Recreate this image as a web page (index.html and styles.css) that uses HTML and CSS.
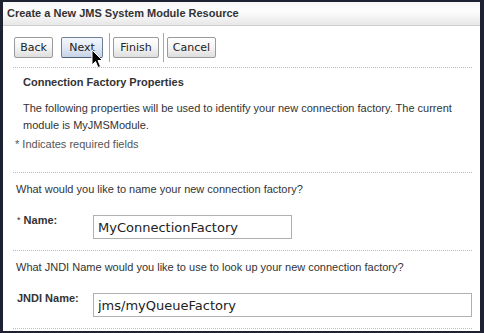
FILE: index.html
```html
<!DOCTYPE html>
<html lang="en">
<head>
    <meta charset="UTF-8">
    <meta name="viewport" content="width=device-width, initial-scale=1.0">
    <title>Create a New JMS System Module Resource</title>
    <link rel="stylesheet" href="styles.css">
</head>
<body>
<div class="frame">
    <div class="header"><h1>Create a New JMS System Module Resource</h1></div>
    <div class="content">
        <div class="toolbar">
            <button class="btn back">Back</button>
            <button class="btn next">Next</button>
            <span class="sep first"></span>
            <button class="btn finish">Finish</button>
            <span class="sep"></span>
            <button class="btn cancel">Cancel</button>
            <svg class="cursor" width="13" height="20" viewBox="0 0 13 20">
                <path d="M1 1 L1 16 L4.5 12.5 L7 18.5 L9.5 17.5 L7 11.5 L11.5 11.5 Z" fill="#000" stroke="#fff" stroke-width="1"/>
            </svg>
        </div>

        <div class="section intro">
            <h2>Connection Factory Properties</h2>
            <p>The following properties will be used to identify your new connection factory. The current module is MyJMSModule.</p>
            <div class="note">* Indicates required fields</div>
        </div>

        <div class="section">
            <div class="question">What would you like to name your new connection factory?</div>
            <div class="row">
                <label for="name"><span class="req">*</span> Name:</label>
                <input type="text" id="name" class="name-input" value="MyConnectionFactory">
            </div>
        </div>

        <div class="section">
            <div class="question">What JNDI Name would you like to use to look up your new connection factory?</div>
            <div class="row">
                <label for="jndi">JNDI Name:</label>
                <input type="text" id="jndi" class="jndi-input" value="jms/myQueueFactory">
            </div>
        </div>
        <div class="section end"></div>
    </div>
</div>
</body>
</html>
```

FILE: styles.css
```css
body{
    margin: 0;
    background-color: #1d2131;
    font-family: "Liberation Sans", Arial, sans-serif;
    font-size: 11px;
    color: #333;
}
.frame{
    margin: 2px 4px 0 3px;
    height: 329px;
    background-color: #fff;
    overflow: hidden;
}
.header{
    height: 23px;
    border-bottom: 1px solid #cfcfcf;
    background: linear-gradient(#f7f7f7, #fdfdfd 40%, #e7e7e7);
}
h1{
    margin: 0;
    padding-left: 4px;
    font-size: 11px;
    line-height: 23px;
    color: #333;
}
.content{
    padding: 0 8px 0 10px;
}
.toolbar{
    position: relative;
    display: flex;
    align-items: center;
    height: 29px;
    margin-top: 7px;
    padding-left: 1px;
}
.btn{
    height: 21px;
    margin: 0;
    padding: 0;
    border: 1px solid #9a9a9a;
    border-radius: 2px;
    background: linear-gradient(#ffffff, #f4f4f4 50%, #dedede);
    font-family: "DejaVu Sans", sans-serif;
    font-size: 11px;
    color: #222;
}
.back{
    width: 39px;
    margin-right: 8px;
}
.next{
    width: 42px;
    border-color: #6f7f9a;
    border-bottom-color: #4f5f7c;
    background: linear-gradient(#f4f7fc, #e2e9f4 50%, #c6d3e7);
}
.finish{
    width: 46px;
}
.cancel{
    width: 49px;
}
.sep{
    width: 1px;
    height: 29px;
    background-color: #a8a8a8;
    margin: 0 3px 0 4px;
}
.sep.first{
    margin-left: 6px;
}
.cursor{
    position: absolute;
    left: 78px;
    top: 16px;
}
.section{
    border-top: 1px dotted #bdbdbd;
}
.intro{
    margin-top: 5px;
}
h2{
    margin: 8px 0 0 10px;
    font-size: 11px;
    line-height: 13px;
}
p{
    margin: 11px 0 0 10px;
    line-height: 17px;
}
.note{
    margin: 4px 0 0 2px;
    line-height: 13px;
    height: 34px;
    color: #555;
}
.question{
    padding: 10px 0 0 3px;
    line-height: 13px;
}
.row{
    display: flex;
    align-items: flex-start;
    margin-top: 18px;
    padding-bottom: 11px;
}
label{
    width: 76px;
    padding-left: 4px;
    line-height: 13px;
    font-weight: bold;
}
.req{
    font-weight: normal;
    font-size: 9px;
    vertical-align: top;
}
input{
    box-sizing: border-box;
    height: 24px;
    margin: 1px 0 0 0;
    padding: 0 4px;
    border: 1px solid #b0b0b0;
    font-family: "DejaVu Sans", sans-serif;
    font-size: 13px;
    color: #222;
}
.name-input{
    width: 199px;
}
.jndi-input{
    flex: 1;
}
```
